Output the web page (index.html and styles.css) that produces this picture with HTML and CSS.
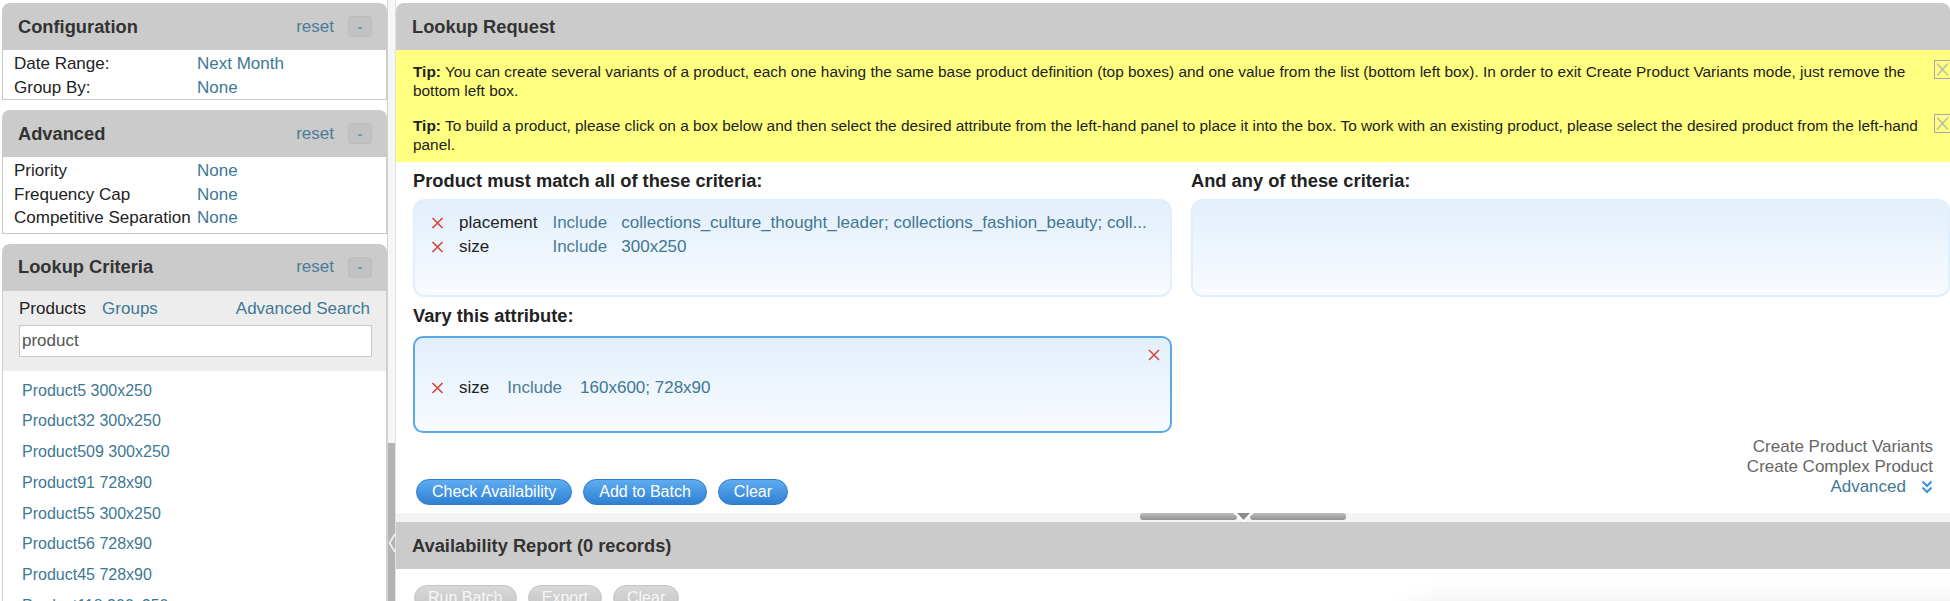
FILE: index.html
```html
<!DOCTYPE html>
<html>
<head>
<meta charset="utf-8">
<title>Lookup</title>
<link rel="stylesheet" href="styles.css">
</head>
<body>
<div class="app">
  <aside class="sidebar">
    <section class="panel">
      <header class="panel-head"><h2>Configuration</h2><a class="reset">reset</a><button class="collapse">-</button></header>
      <div class="props props-config">
        <div class="prop"><span>Date Range:</span><a class="val">Next Month</a></div>
        <div class="prop"><span>Group By:</span><a class="val">None</a></div>
      </div>
    </section>
    <section class="panel">
      <header class="panel-head"><h2>Advanced</h2><a class="reset">reset</a><button class="collapse">-</button></header>
      <div class="props props-adv">
        <div class="prop"><span>Priority</span><a class="val">None</a></div>
        <div class="prop"><span>Frequency Cap</span><a class="val">None</a></div>
        <div class="prop"><span>Competitive Separation</span><a class="val">None</a></div>
      </div>
    </section>
    <section class="panel panel-grow">
      <header class="panel-head"><h2>Lookup Criteria</h2><a class="reset">reset</a><button class="collapse">-</button></header>
      <div class="search">
        <div class="tabs"><span class="tab tab-active">Products</span><a class="tab">Groups</a><a class="adv-search">Advanced Search</a></div>
        <input class="search-input" type="text" value="product">
      </div>
      <ul class="results">
        <li>Product5 300x250</li>
        <li>Product32 300x250</li>
        <li>Product509 300x250</li>
        <li>Product91 728x90</li>
        <li>Product55 300x250</li>
        <li>Product56 728x90</li>
        <li>Product45 728x90</li>
        <li>Product118 300x250</li>
      </ul>
    </section>
  </aside>

  <div class="scrollbar">
    <div class="thumb"></div>
    <svg class="collapse-arrow" width="8" height="20" viewBox="0 0 8 20"><polyline points="7,1 1.5,10 7,19" fill="none" stroke="#f4f4f4" stroke-width="1.6"/></svg>
  </div>

  <main class="main">
    <section class="lookup">
      <header class="main-head"><h2>Lookup Request</h2></header>
      <div class="tips">
        <div class="tip">
          <p><b>Tip:</b> You can create several variants of a product, each one having the same base product definition (top boxes) and one value from the list (bottom left box). In order to exit Create Product Variants mode, just remove the bottom left box.</p>
          <svg class="tip-close" width="16" height="19" viewBox="0 0 16 19"><rect x="0.5" y="0.5" width="17" height="18" fill="none" stroke="#a8a8a8"/><path d="M3 3.5 L14 15.5 M14 3.5 L3 15.5" stroke="#b4b4b4" stroke-width="1.2"/></svg>
        </div>
        <div class="tip">
          <p><b>Tip:</b> To build a product, please click on a box below and then select the desired attribute from the left-hand panel to place it into the box. To work with an existing product, please select the desired product from the left-hand panel.</p>
          <svg class="tip-close" width="16" height="19" viewBox="0 0 16 19"><rect x="0.5" y="0.5" width="17" height="18" fill="none" stroke="#a8a8a8"/><path d="M3 3.5 L14 15.5 M14 3.5 L3 15.5" stroke="#b4b4b4" stroke-width="1.2"/></svg>
        </div>
      </div>

      <div class="builder">
        <div class="criteria">
          <div class="col">
            <h3 class="crit-title">Product must match all of these criteria:</h3>
            <div class="cbox">
              <table class="crit-table">
                <tr>
                  <td class="x-cell"><svg class="xmark" width="13" height="12" viewBox="0 0 13 12"><path d="M1.5 1 L11.5 11 M11.5 1 L1.5 11" stroke="#d6473f" stroke-width="1.7"/></svg></td>
                  <td class="attr">placement</td>
                  <td class="op">Include</td>
                  <td class="vals">collections_culture_thought_leader; collections_fashion_beauty; coll...</td>
                </tr>
                <tr>
                  <td class="x-cell"><svg class="xmark" width="13" height="12" viewBox="0 0 13 12"><path d="M1.5 1 L11.5 11 M11.5 1 L1.5 11" stroke="#d6473f" stroke-width="1.7"/></svg></td>
                  <td class="attr">size</td>
                  <td class="op">Include</td>
                  <td class="vals">300x250</td>
                </tr>
              </table>
            </div>
            <h3 class="crit-title vary-title">Vary this attribute:</h3>
            <div class="cbox vary">
              <div class="vary-top"><svg width="12" height="12" viewBox="0 0 12 12"><path d="M1 1 L11 11 M11 1 L1 11" stroke="#d6473f" stroke-width="1.5"/></svg></div>
              <table class="crit-table vary-table">
                <tr>
                  <td class="x-cell"><svg class="xmark" width="13" height="12" viewBox="0 0 13 12"><path d="M1.5 1 L11.5 11 M11.5 1 L1.5 11" stroke="#d6473f" stroke-width="1.7"/></svg></td>
                  <td class="attr">size</td>
                  <td class="op">Include</td>
                  <td class="vals">160x600; 728x90</td>
                </tr>
              </table>
            </div>
          </div>
          <div class="col">
            <h3 class="crit-title">And any of these criteria:</h3>
            <div class="cbox"></div>
          </div>
        </div>

        <div class="footer">
          <div class="actions">
            <button class="btn">Check Availability</button>
            <button class="btn">Add to Batch</button>
            <button class="btn">Clear</button>
          </div>
          <div class="links">
            <a class="link-muted">Create Product Variants</a>
            <a class="link-muted">Create Complex Product</a>
            <a class="link-adv">Advanced<svg class="dchev" width="12" height="14" viewBox="0 0 12 14"><path d="M1.5 1.5 L6 6 L10.5 1.5 M1.5 7.5 L6 12 L10.5 7.5" fill="none" stroke="#3b8de0" stroke-width="2"/></svg></a>
          </div>
        </div>
      </div>
    </section>

    <div class="splitter">
      <svg class="handle" width="206" height="9" viewBox="0 0 206 9">
        <defs><linearGradient id="hg" x1="0" y1="0" x2="0" y2="1"><stop offset="0" stop-color="#bdbdbd"/><stop offset="1" stop-color="#929292"/></linearGradient></defs>
        <rect x="0" y="0" width="97" height="7" rx="3" fill="url(#hg)"/>
        <rect x="110" y="0" width="96" height="7" rx="3" fill="url(#hg)"/>
        <polygon points="93,0 114,0 103.5,9" fill="#ffffff"/>
        <polygon points="97,0 110,0 103.5,7" fill="#8c8c8c"/>
      </svg>
    </div>

    <section class="report">
      <header class="main-head"><h2>Availability Report (0 records)</h2></header>
      <div class="report-body">
        <button class="btn btn-off">Run Batch</button>
        <button class="btn btn-off">Export</button>
        <button class="btn btn-off">Clear</button>
      </div>
    </section>
  </main>
</div>
</body>
</html>
```

FILE: styles.css
```css
* { box-sizing: border-box; }

html, body {
  margin: 0;
  padding: 0;
}

body {
  width: 1950px;
  height: 601px;
  overflow: hidden;
  background: #ffffff;
  font-family: "Liberation Sans", Arial, Helvetica, sans-serif;
  color: #222;
}

a { cursor: pointer; }

.app {
  display: flex;
  height: 601px;
  padding: 3px 0 0 2px;
}

/* ---------- sidebar ---------- */
.sidebar {
  width: 385px;
  flex: none;
  display: flex;
  flex-direction: column;
  gap: 10px;
  min-height: 0;
}

.panel {
  display: flex;
  flex-direction: column;
  flex: none;
}

.panel-grow {
  flex: 1;
  min-height: 0;
  overflow: hidden;
}

.panel-head {
  height: 47px;
  flex: none;
  background: #cbcbcb;
  border-radius: 8px 8px 0 0;
  display: flex;
  align-items: center;
  padding: 0 15px 0 16px;
}

.panel-head h2 {
  flex: 1;
  margin: 0;
  font-size: 18.3px;
  font-weight: bold;
  color: #333;
}

.reset {
  color: #4b7d96;
  font-size: 17px;
  margin-right: 14px;
}

.collapse {
  width: 24px;
  height: 21px;
  flex: none;
  padding: 0;
  border: 1px solid #bcbcbc;
  border-radius: 4px;
  background: #c2c2c2;
  color: #6f93a8;
  font-family: "Liberation Sans", Arial, sans-serif;
  font-size: 15px;
  font-weight: bold;
  line-height: 18px;
}

.props {
  border: 1px solid #c9c9c9;
  border-top: 0;
  padding: 2px 10px 0 11px;
  font-size: 17px;
  line-height: 23.5px;
  color: #222;
}

.props-adv { padding-bottom: 3px; }

.prop {
  display: grid;
  grid-template-columns: 183px 1fr;
}

.val { color: #3e7893; }

.search {
  flex: none;
  background: #ededed;
  border-left: 1px solid #cfcfcf;
  border-right: 1px solid #cfcfcf;
  padding: 8px 14px 14px 16px;
}

.tabs {
  display: flex;
  align-items: center;
  font-size: 17px;
  line-height: 20px;
  margin-right: 2px;
}

.tab { margin-right: 16px; color: #3e7893; }
.tab-active { color: #222; }
.adv-search { margin-left: auto; color: #3e7893; }

.search-input {
  display: block;
  width: 100%;
  height: 32px;
  margin-top: 6px;
  border: 1px solid #c9c9c9;
  background: #fff;
  padding: 0 2px;
  font-family: "Liberation Sans", Arial, sans-serif;
  font-size: 17px;
  color: #555;
  outline: none;
}

.results {
  flex: 1;
  margin: 0;
  list-style: none;
  padding: 5px 0 0 19px;
  border-left: 1px solid #cfcfcf;
  border-right: 1px solid #cfcfcf;
  font-size: 16px;
  line-height: 30.8px;
  color: #3e7893;
}

/* ---------- scrollbar ---------- */
.scrollbar {
  position: relative;
  width: 9px;
  flex: none;
  margin-top: -3px;
  display: flex;
  flex-direction: column;
  padding-top: 443px;
  background: #f6f6f6;
  border-left: 1px solid #d2d2d2;
  border-right: 1px solid #e0e0e0;
}

.thumb {
  flex: 1;
  background: #b3b3b3;
}

.collapse-arrow {
  position: absolute;
  left: 0;
  top: 533px;
}

/* ---------- main ---------- */
.main {
  flex: 1;
  min-width: 0;
  min-height: 0;
  display: flex;
  flex-direction: column;
  overflow: hidden;
}

.lookup {
  flex: none;
  border-radius: 8px 8px 0 0;
  overflow: hidden;
}

.main-head {
  height: 47px;
  flex: none;
  background: #cbcbcb;
  display: flex;
  align-items: center;
  padding-left: 16px;
}

.main-head h2 {
  margin: 0;
  font-size: 18.3px;
  font-weight: bold;
  color: #333;
}

.tips {
  background: #ffff80;
  padding: 12px 0 8px 17px;
}

.tip {
  display: flex;
  align-items: flex-start;
}

.tip + .tip { margin-top: 16px; }

.tip p {
  flex: 1;
  margin: 0;
  font-size: 15.4px;
  line-height: 19px;
  color: #222;
}

.tip-close {
  flex: none;
  margin-left: 9px;
  margin-top: -2px;
}

.builder {
  padding: 9px 0 8px 17px;
}

.criteria {
  display: grid;
  grid-template-columns: 1fr 1fr;
  column-gap: 19px;
  align-items: start;
}

.crit-title {
  margin: 0 0 8px;
  font-size: 18.3px;
  line-height: 20px;
  font-weight: bold;
  color: #222;
}

.vary-title {
  margin-top: 9px;
  margin-bottom: 10px;
}

.cbox {
  height: 98px;
  border: 2px solid #e1eefb;
  border-radius: 12px;
  background: linear-gradient(#e3effb, #f8fbff);
  padding: 10px 10px 0 16px;
}

.cbox.vary {
  height: 97px;
  border-color: #5aa8ea;
  border-radius: 10px;
  padding-top: 7px;
}

.vary-top {
  display: flex;
  justify-content: flex-end;
  align-items: center;
  height: 20px;
}

.crit-table {
  border-collapse: collapse;
  font-size: 17px;
  line-height: 24px;
}

.vary-table { margin-top: 11px; }

.crit-table td {
  padding: 0;
  white-space: nowrap;
  vertical-align: middle;
}

.x-cell { width: 28px; }
.xmark { display: block; }
.attr { color: #222; padding-right: 15px !important; }
.op { color: #4b7d96; padding-right: 14px !important; }
.vals { color: #3e7893; }
.vary-table .attr { padding-right: 18px !important; }
.vary-table .op { padding-right: 18px !important; }

.footer {
  display: flex;
  justify-content: space-between;
  align-items: flex-end;
  padding-right: 17px;
}

.actions {
  display: flex;
  gap: 11px;
  margin-left: 3px;
}

.btn {
  height: 26px;
  flex: none;
  padding: 0 15px;
  border: 1px solid #2c7ccc;
  border-radius: 13px;
  background: linear-gradient(#5eacf1, #2f80d2);
  color: #fff;
  font-family: "Liberation Sans", Arial, sans-serif;
  font-size: 16px;
  line-height: 24px;
}

.links {
  display: flex;
  flex-direction: column;
  align-items: flex-end;
  margin: 4px 0 8px;
  font-size: 17px;
  line-height: 20px;
}

.link-muted { color: #666; }

.link-adv {
  color: #3e7893;
  display: flex;
  align-items: center;
}

.dchev { margin-left: 15px; }

.splitter {
  height: 9px;
  flex: none;
  background: #f4f4f4;
  padding-left: 744px;
}

.handle { display: block; }

.report {
  flex: 1;
  min-height: 0;
  display: flex;
  flex-direction: column;
  overflow: hidden;
}

.report-body {
  position: relative;
  flex: 1;
  min-height: 0;
  display: flex;
  gap: 11px;
  align-items: flex-start;
  padding: 16px 0 0 18px;
  overflow: hidden;
}

.report-body::after {
  content: "";
  position: absolute;
  left: 990px;
  top: 42px;
  width: 900px;
  height: 120px;
  border-radius: 60px;
  box-shadow: 0 -4px 30px rgba(0, 0, 0, 0.13);
}

.btn-off {
  border-color: #c3c3c3;
  background: linear-gradient(#d8d8d8, #c4c4c4);
  color: #f7f7f7;
  padding: 0 13px;
}
```
